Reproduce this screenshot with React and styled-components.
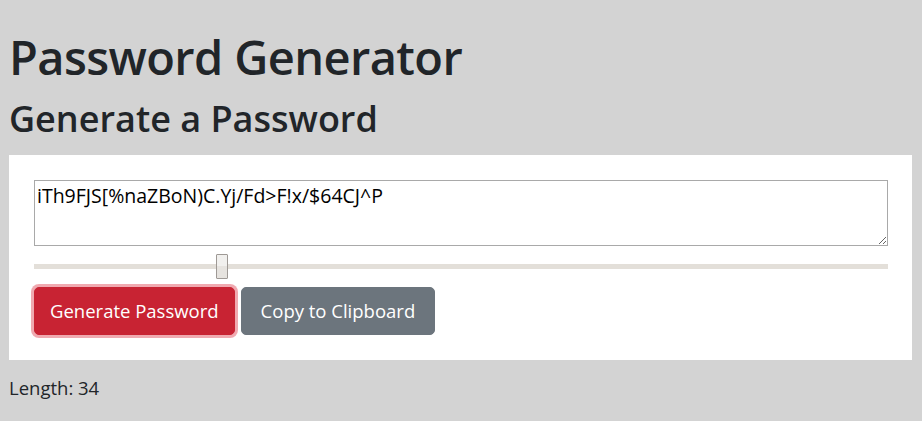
import styled, { createGlobalStyle } from "styled-components"
import { useState } from "react"

const GlobalStyle = createGlobalStyle`
    body {
        margin: 0;
        background: #d3d3d3;
        font-family: "Open Sans", "Noto Sans", sans-serif;
        color: #212529;
    }
`

// 전체 페이지
const Page = styled.div`
    padding: 0 10px 0 9px;
`

const Title = styled.h1`
    margin: 0;
    padding-top: 20px;
    font-size: 47px;
    font-weight: 600;
    letter-spacing: -0.6px;
    line-height: 74px;
`

const SubTitle = styled.h2`
    margin: 0;
    font-size: 36px;
    font-weight: 600;
    line-height: 50px;
    margin-bottom: 11px;
`

// 흰색 카드
const Card = styled.div`
    background: #fff;
    padding: 25px 24px 25px 25px;
    display: flex;
    flex-direction: column;
    gap: 8px;
`

const PasswordBox = styled.textarea`
    box-sizing: border-box;
    width: 100%;
    height: 66px;
    margin: 0;
    padding: 2px;
    border: 1px solid #a9a9a9;
    font-family: "Open Sans", "Noto Sans", sans-serif;
    font-size: 19.5px;
    line-height: 26px;
    color: #000;
    display: block;
`

const Slider = styled.input`
    -webkit-appearance: none;
    appearance: none;
    width: 100%;
    height: 25px;
    margin: 0;
    background: transparent;

    &::-webkit-slider-runnable-track {
        height: 5px;
        background: #e3dfd9;
    }
    &::-webkit-slider-thumb {
        -webkit-appearance: none;
        box-sizing: border-box;
        width: 12px;
        height: 25px;
        margin-top: -10px;
        border: 1px solid #9e9995;
        border-radius: 1px;
        background: linear-gradient(#f1f0ee 50%, #e6e3df 50%);
    }
`

const ButtonRow = styled.div`
    display: flex;
    gap: 6px;
`

const Button = styled.button`
    height: 48px;
    padding: 0 ${(props) => (props.danger ? '15px' : '19px')};
    border: 1px solid ${(props) => (props.danger ? '#c82333' : '#6c757d')};
    border-radius: 5px;
    background: ${(props) => (props.danger ? '#c82333' : '#6c757d')};
    color: #fff;
    font-family: "Open Sans", "Noto Sans", sans-serif;
    font-size: 18.5px;
    line-height: 30px;
    cursor: pointer;
    box-shadow: ${(props) => (props.focused ? '0 0 0 3px rgba(225, 83, 97, 0.5)' : 'none')};
`

const LengthText = styled.div`
    padding-top: 16px;
    font-size: 18.5px;
    line-height: 24px;
`

export default function App(){
    const [length, setLength] = useState(34);

    return(
        <Page>
            <GlobalStyle/>
            <Title>Password Generator</Title>
            <SubTitle>Generate a Password</SubTitle>
            <Card>
                <PasswordBox readOnly value="iTh9FJS[%naZBoN)C.Yj/Fd>F!x/$64CJ^P"/>
                <Slider type="range" min={8} max={128} value={length} onChange={(e) => setLength(Number(e.target.value))}/>
                <ButtonRow>
                    <Button danger focused>Generate Password</Button>
                    <Button>Copy to Clipboard</Button>
                </ButtonRow>
            </Card>
            <LengthText>Length: {length}</LengthText>
        </Page>
    )
}
